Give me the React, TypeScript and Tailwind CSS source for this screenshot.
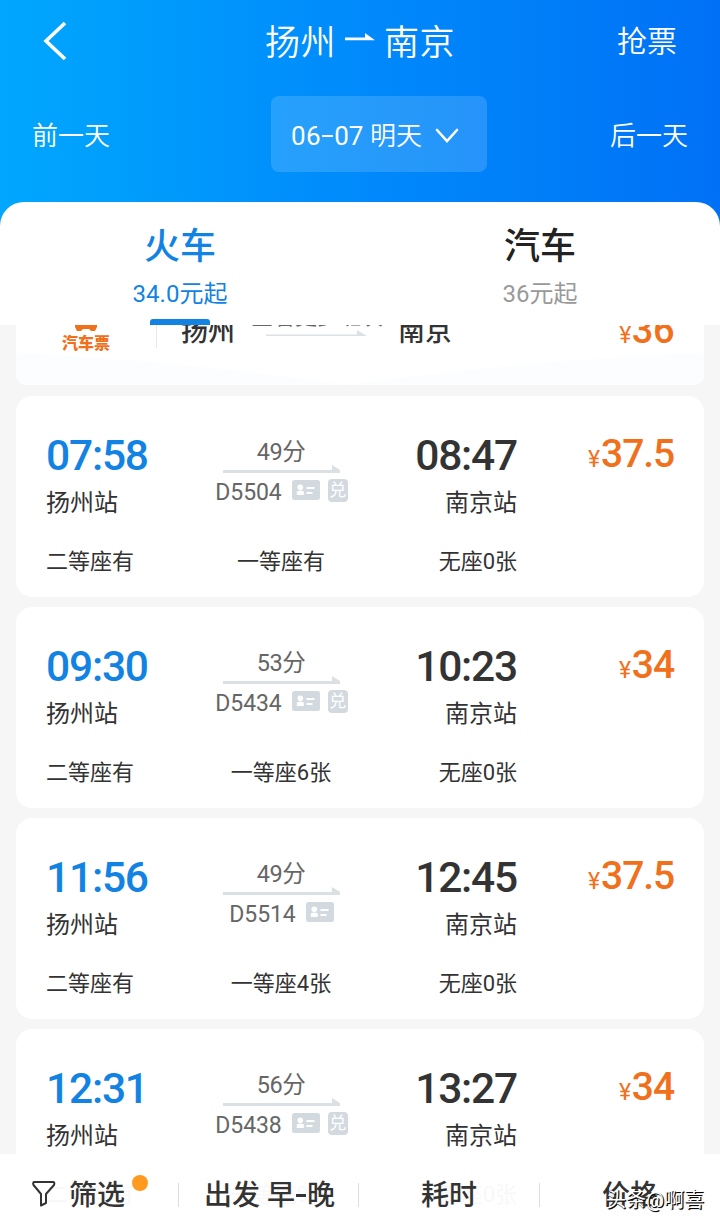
type Train = {
  depart: string;
  arrive: string;
  duration: string;
  code: string;
  exchange: boolean;
  price: string;
  seats: [string, string, string];
};

const TRAINS: Train[] = [
  { depart: "07:58", arrive: "08:47", duration: "49分", code: "D5504", exchange: true, price: "37.5", seats: ["二等座有", "一等座有", "无座0张"] },
  { depart: "09:30", arrive: "10:23", duration: "53分", code: "D5434", exchange: true, price: "34", seats: ["二等座有", "一等座6张", "无座0张"] },
  { depart: "11:56", arrive: "12:45", duration: "49分", code: "D5514", exchange: false, price: "37.5", seats: ["二等座有", "一等座4张", "无座0张"] },
  { depart: "12:31", arrive: "13:27", duration: "56分", code: "D5438", exchange: true, price: "34", seats: ["二等座有", "一等座9张", "无座0张"] },
];

function Header() {
  return (
    <header className="-mb-6 h-[226px] shrink-0 bg-linear-to-r from-[#00a7fd] via-[#018afb] to-[#0071f6] text-white">
      <div className="grid h-[82px] grid-cols-3 items-center pr-[43px] pl-[43px]">
        <svg width="24" height="40" viewBox="0 0 24 40" fill="none" stroke="currentColor" strokeWidth="3.6">
          <path d="M22 2 3 20 22 38" />
        </svg>
        <h1 className="flex items-center justify-center gap-[9px] pt-1 text-[35px] leading-none font-[350] tracking-[0.5px] whitespace-nowrap">
          扬州
          <svg className="-mt-[12px]" width="30" height="12" viewBox="0 0 30 12" fill="currentColor">
            <path d="M0 6.500H20V2L30 9.300H0Z" />
          </svg>
          南京
        </h1>
        <span className="pt-[2px] text-right text-[30px] leading-none font-[350]">抢票</span>
      </div>
      <div className="mt-[14px] flex h-[76px] items-center px-8">
        <span className="w-[78px] pt-1 text-[26px] leading-none font-[350]">前一天</span>
        <button className="ml-[161px] flex h-[76px] w-[216px] items-center rounded-lg bg-white/15 pt-1 pl-[20px] text-[26px] leading-none font-[350] whitespace-nowrap">
          <span className="font-normal tracking-[0.5px]">06</span>
          <span className="mx-px inline-block h-[2px] w-[11px] bg-white" />
          <span className="font-normal">07&nbsp;</span>
          明天
          <svg className="ml-[13px]" width="24" height="16" viewBox="0 0 24 16" fill="none" stroke="currentColor" strokeWidth="2.600" strokeLinecap="round">
            <path d="M2 2 12 13 22 2" />
          </svg>
        </button>
        <span className="ml-auto pt-1 text-right text-[26px] leading-none font-[350]">后一天</span>
      </div>
    </header>
  );
}

function Tabs() {
  return (
    <nav className="relative z-10 grid h-[123px] shrink-0 grid-cols-2 rounded-t-[24px] bg-white text-center">
      <div className="flex flex-col items-center text-[#1283e3]">
        <span className="mt-[26px] text-[36px] leading-[38px] font-medium">火车</span>
        <span className="mt-[14px] text-[24px] leading-[28px]">34.0元起</span>
        <span className="mt-auto h-[6px] w-[60px] rounded-t-[3px] bg-[#1283e3]" />
      </div>
      <div className="flex flex-col items-center text-[#222]">
        <span className="mt-[26px] text-[36px] leading-[38px] font-medium">汽车</span>
        <span className="mt-[14px] text-[24px] leading-[28px] text-[#999]">36元起</span>
      </div>
    </nav>
  );
}

function BusCard() {
  return (
    <div className="relative flex h-[60px] shrink-0 items-start overflow-hidden rounded-b-[10px] bg-white text-[#333]">
      <svg className="absolute inset-x-0 bottom-0" width="688" height="32" viewBox="0 0 688 32" fill="#fbfdfe">
        <path d="M0 0Q170 8 330 32H0ZM688 0Q520 6 330 32H688Z" />
      </svg>
      <div className="relative flex w-[140px] flex-col items-center text-[#f0701c]">
        <svg width="24" height="6" viewBox="0 0 24 6" fill="currentColor">
          <path d="M1 0H23V2L21 6H17L15 4H9L7 6H3L1 2Z" />
        </svg>
        <span className="mt-[5px] text-[16px] leading-4 font-black">汽车票</span>
      </div>
      <span className="h-[23px] w-px bg-[#e6e8ea]" />
      <span className="relative -mt-[7px] ml-[24px] w-[56px] text-[27px] leading-7 font-medium whitespace-nowrap">扬州</span>
      <div className="relative ml-[14px] w-[135px]">
        <span className="-mt-[19px] block text-[22px] leading-[22px] whitespace-nowrap text-[#666]">查看更多班次</span>
        <svg className="mt-[2px] ml-[15px]" width="101" height="6" viewBox="0 0 101 6" fill="#dce1e5">
          <path d="M0 4.500H91V0L101 6H0Z" />
        </svg>
      </div>
      <span className="relative -mt-[7px] ml-[12px] text-[27px] leading-7 font-medium">南京</span>
      <span className="relative -mt-[15px] ml-auto pr-[30px] text-[38px] leading-10 font-medium tracking-[-0.5px] text-[#f0701c]">
        <span className="mr-px text-[23px] font-normal">¥</span>36
      </span>
    </div>
  );
}

function IdBadge() {
  return (
    <svg width="28" height="20" viewBox="0 0 28 20" fill="white">
      <rect width="28" height="20" rx="2.500" fill="#d2dae0" />
      <circle cx="8.300" cy="7.300" r="2.800" />
      <path d="M4.800 15V12Q4.800 10.500 8.300 10.500T11.800 12V15ZM14.500 7H22.500V9H14.500ZM14.500 12H20.500V14H14.500Z" />
    </svg>
  );
}

function TrainCard({ train }: { train: Train }) {
  return (
    <article className="h-[201px] shrink-0 rounded-[16px] bg-white px-[30px] text-[#333]">
      <div className="flex h-[134px]">
        <div className="w-[130px] pt-[37px]">
          <div className="text-[42.500px] leading-[46px] font-medium tracking-[-1.200px] text-[#1283e3]">{train.depart}</div>
          <div className="mt-[10px] text-[24px] leading-[28px]">扬州站</div>
        </div>
        <div className="flex w-[210px] flex-col items-center pt-[44px] text-[#666]">
          <span className="text-[23.500px] leading-6 tracking-[-0.5px]">{train.duration}</span>
          <svg className="mt-[1px]" width="117" height="8" viewBox="0 0 117 8" fill="#dae0e4">
            <path d="M0 5H109V0L117 5V8H0Z" />
          </svg>
          <div className="mt-[8px] flex h-6 items-center pl-px text-[23px] leading-6 tracking-[-0.100px]">
            {train.code}
            <span className="-mt-[6px] ml-[10px] flex items-center gap-2">
              <IdBadge />
              {train.exchange && (
                <span className="flex h-[23px] w-5 items-center justify-center rounded-[4px] bg-[#d2dae0] text-[17px] leading-none text-white">兑</span>
              )}
            </span>
          </div>
        </div>
        <div className="w-[131px] pt-[37px] text-right">
          <div className="text-[42.500px] leading-[46px] font-medium tracking-[-1.200px]">{train.arrive}</div>
          <div className="mt-[10px] text-[24px] leading-[28px]">南京站</div>
        </div>
        <div className="flex-1 pt-[38px] text-right text-[39px] leading-10 font-medium tracking-[-1.100px] whitespace-nowrap text-[#f0701c]">
          <span className="mr-[2px] text-[23px] font-normal">¥</span>
          {train.price}
        </div>
      </div>
      <div className="flex pt-[18px] text-[22px] leading-7">
        <span className="w-[130px]">{train.seats[0]}</span>
        <span className="w-[210px] text-center">{train.seats[1]}</span>
        <span className="w-[131px] text-right">{train.seats[2]}</span>
      </div>
    </article>
  );
}

function Divider() {
  return <span className="mt-px h-[24px] w-px bg-[#ddd]" />;
}

function SortBar() {
  return (
    <footer className="absolute inset-x-0 bottom-0 z-20 flex h-[72px] bg-white/96 pt-[28px] text-[28px] leading-7 font-medium text-[#333]">
      <div className="relative flex w-[178px] pl-[32px]">
        <svg className="-mt-px mr-[13px]" width="24" height="26" viewBox="0 0 24 26" fill="none" stroke="currentColor" strokeWidth="2" strokeLinejoin="round">
          <path d="M2.500 1H21Q23 1 22 4L14 13V22L9 24.500V13L1.500 4Q.5 1 2.500 1Z" />
        </svg>
        筛选
        <i className="absolute -top-[7px] left-[132px] h-4 w-4 rounded-full bg-[#ff9a1f]" />
      </div>
      <Divider />
      <div className="flex w-[179px] items-start justify-center pl-[2px] whitespace-nowrap">
        出发 早
        <span className="mx-px mt-[12px] h-[3px] w-[10px] bg-[#333]" />
        晚
      </div>
      <Divider />
      <div className="w-[180px] text-center">耗时</div>
      <Divider />
      <div className="flex-1 text-center">价格</div>
    </footer>
  );
}

export default function App() {
  return (
    <main className="relative flex h-[1226px] w-[720px] flex-col overflow-hidden bg-[#f6f6f6] font-['Roboto','Noto_Sans_CJK_SC',sans-serif]">
      <Header />
      <Tabs />
      <section className="flex min-h-0 flex-1 flex-col gap-[10px] overflow-hidden px-4">
        <BusCard />
        <div className="mt-px flex flex-col gap-[10px]">
          {TRAINS.map((train) => (
            <TrainCard key={train.code} train={train} />
          ))}
        </div>
      </section>
      <SortBar />
      <span className="absolute right-[16px] bottom-[14px] z-30 text-[20px] leading-6 text-white [text-shadow:1px_1px_1px_#000,1px_1px_0_#222]">头条@啊喜</span>
    </main>
  );
}
